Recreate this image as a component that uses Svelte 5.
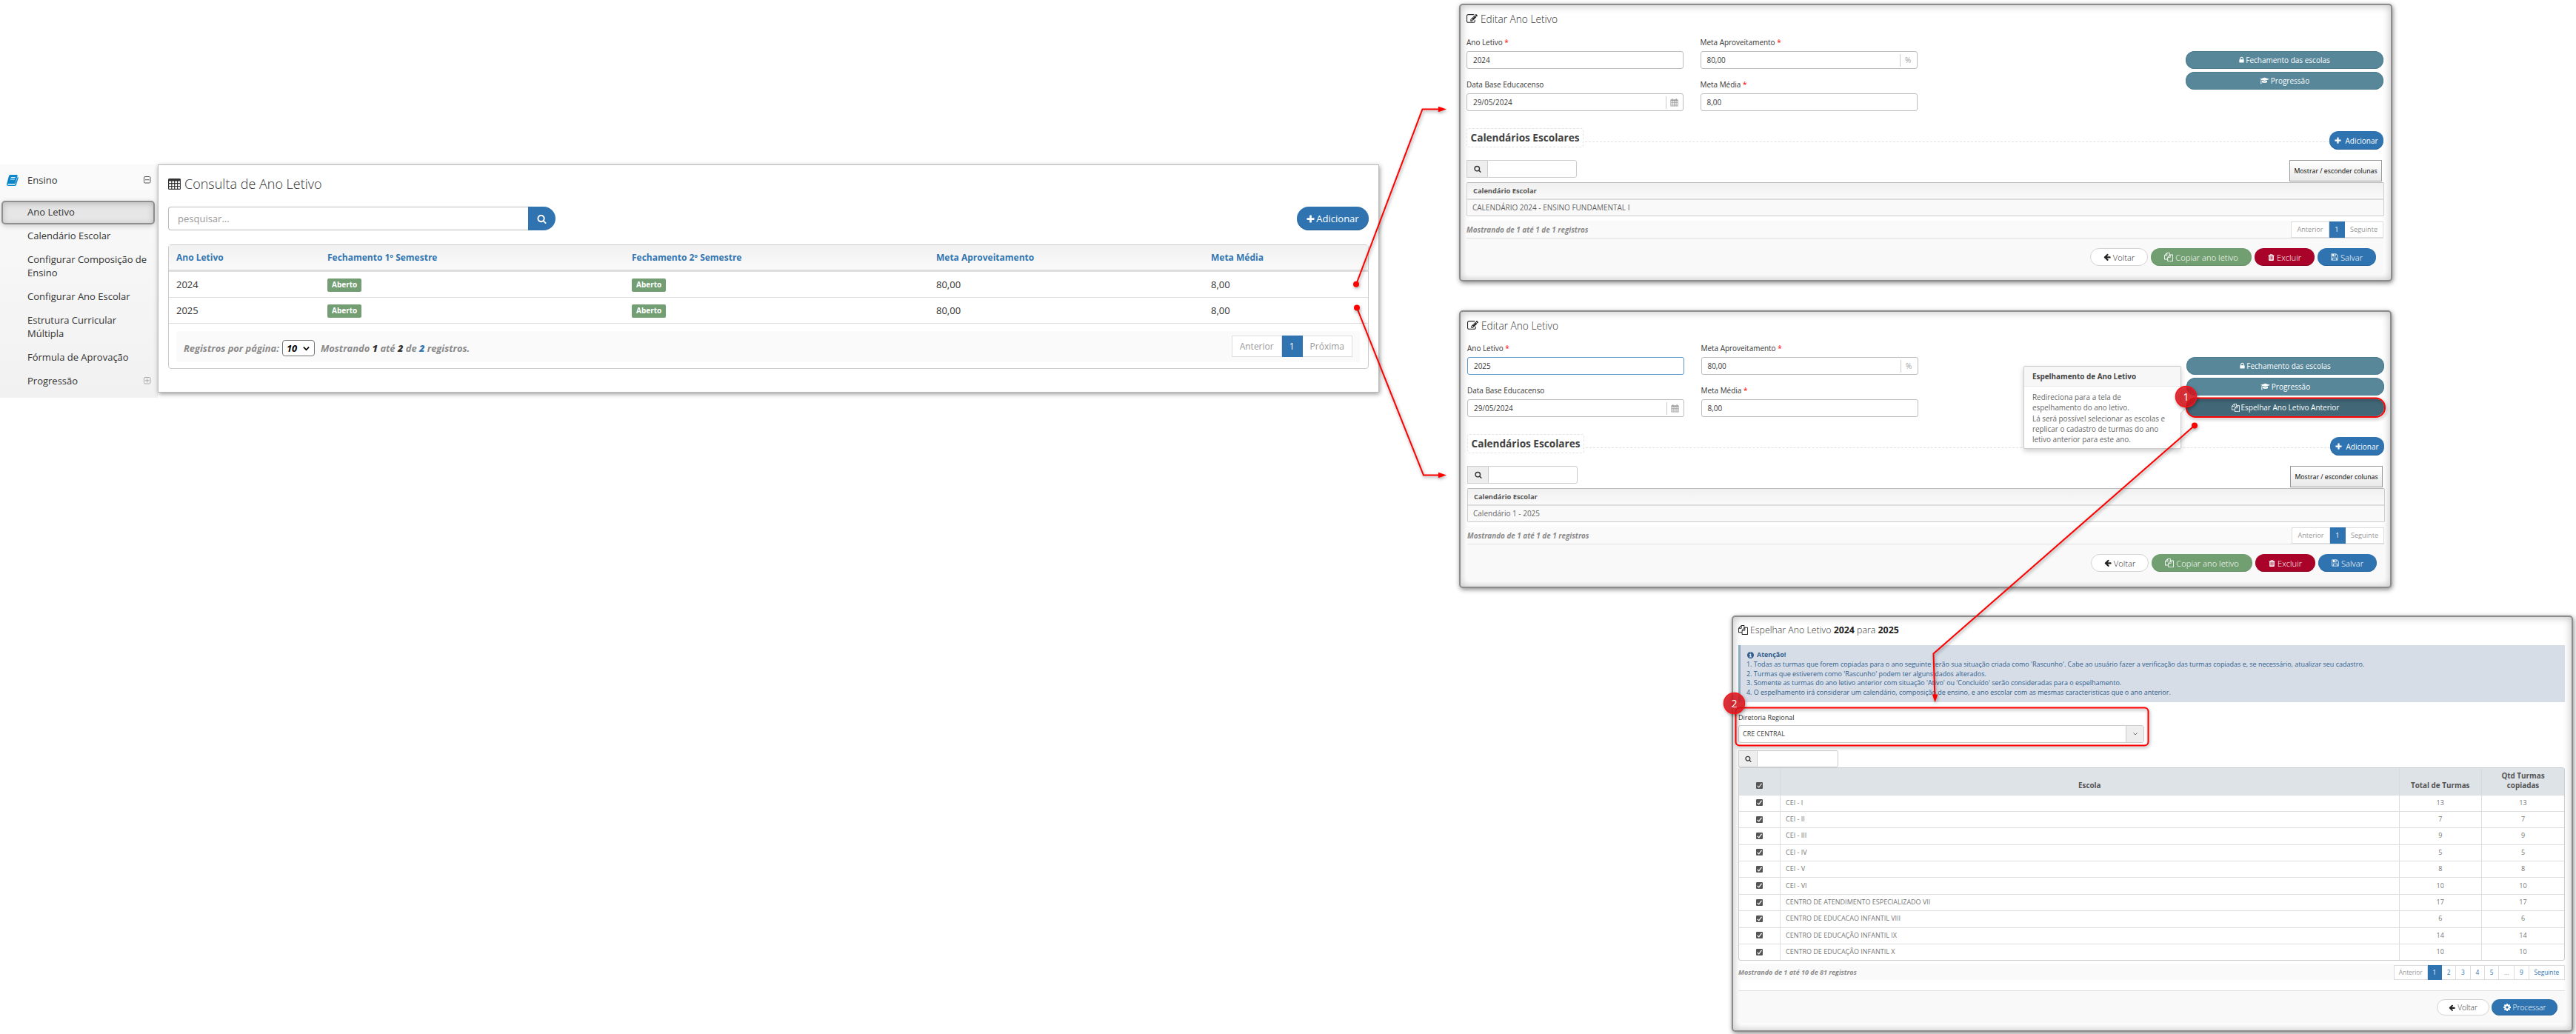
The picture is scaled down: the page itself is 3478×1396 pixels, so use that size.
<script>
    // icon outlines, [viewBox, path]
    const icons = {
        edit: ["0 0 1792 1792", "M888 1184l116-116-152-152-116 116v56h96v96h56zm440-720q-16-16-33 1l-350 350q-17 17-1 33t33-1l350-350q17-17 1-33zm80 594v190q0 119-84.5 203.5t-203.5 84.5h-832q-119 0-203.5-84.5t-84.5-203.5v-832q0-119 84.5-203.5t203.5-84.5h832q63 0 117 25 15 7 18 23 3 17-9 29l-49 49q-14 14-32 8-23-6-45-6h-832q-66 0-113 47t-47 113v832q0 66 47 113t113 47h832q66 0 113-47t47-113v-126q0-13 9-22l64-64q15-15 35-7t20 29zm-96-738l288 288-672 672h-288v-288zm444 132l-92 92-288-288 92-92q28-28 68-28t68 28l152 152q28 28 28 68t-28 68z"],
        search: ["0 0 1792 1792", "M1216 832q0-185-131.5-316.5t-316.5-131.5-316.5 131.5-131.5 316.5 131.5 316.5 316.5 131.5 316.5-131.5 131.5-316.5zm512 832q0 52-38 90t-90 38q-54 0-90-38l-343-342q-179 124-399 124-143 0-273.5-55.5t-225-150-150-225-55.5-273.5 55.5-273.5 150-225 225-150 273.5-55.5 273.5 55.5 225 150 150 225 55.5 273.5q0 220-124 399l343 343q37 37 37 90z"],
        plus: ["128 64 1536 1536", "M1600 736v192q0 40-28 68t-68 28h-416v416q0 40-28 68t-68 28h-192q-40 0-68-28t-28-68v-416h-416q-40 0-68-28t-28-68v-192q0-40 28-68t68-28h416v-416q0-40 28-68t68-28h192q40 0 68 28t28 68v416h416q40 0 68 28t28 68z"],
        lock: ["256 0 1280 1792", "M640 768h512v-192q0-106-75-181t-181-75-181 75-75 181v192zm832 96v576q0 40-28 68t-68 28h-960q-40 0-68-28t-28-68v-576q0-40 28-68t68-28h32v-192q0-184 132-316t316-132 316 132 132 316v192h32q40 0 68 28t28 68z"],
        cap: ["0 0 2304 1792", "M1774 836l18 316q4 69-82 128t-235 93.5-323 34.5-323-34.5-235-93.5-82-128l18-316 574 181q22 7 48 7t48-7zm530-324q0 23-22 31l-1120 352q-4 1-10 1t-10-1l-652-206q-43 34-71 111.5t-34 178.5q63 36 63 109 0 69-58 107l58 433q2 14-8 25-9 11-24 11h-192q-15 0-24-11-10-11-8-25l58-433q-58-38-58-107 0-73 65-111 11-207 98-330l-333-104q-22-8-22-31t22-31l1120-352q4-1 10-1t10 1l1120 352q22 8 22 31z"],
        copy: ["0 0 1792 1792", "M1696 384q40 0 68 28t28 68v1216q0 40-28 68t-68 28h-960q-40 0-68-28t-28-68v-288h-544q-40 0-68-28t-28-68v-672q0-40 20-88t48-76l408-408q28-28 76-48t88-20h416q40 0 68 28t28 68v328q68-40 128-40h416zm-544 213l-299 299h299v-299zm-640-384l-299 299h299v-299zm196 647l316-316v-416h-384v416q0 40-28 68t-68 28h-416v640h512v-256q0-40 20-88t48-76zm956 804v-1152h-384v416q0 40-28 68t-68 28h-416v640h896z"],
        trash: ["128 0 1536 1792", "M704 1376v-704q0-14-9-23t-23-9h-64q-14 0-23 9t-9 23v704q0 14 9 23t23 9h64q14 0 23-9t9-23zm256 0v-704q0-14-9-23t-23-9h-64q-14 0-23 9t-9 23v704q0 14 9 23t23 9h64q14 0 23-9t9-23zm256 0v-704q0-14-9-23t-23-9h-64q-14 0-23 9t-9 23v704q0 14 9 23t23 9h64q14 0 23-9t9-23zm-544-992h448l-48-117q-7-9-17-11h-317q-10 2-17 11zm928 32v64q0 14-9 23t-23 9h-96v948q0 83-47 143.5t-113 60.5h-832q-66 0-113-58.5t-47-141.5v-952h-96q-14 0-23-9t-9-23v-64q0-14 9-23t23-9h309l70-167q15-37 54-63t79-26h320q40 0 79 26t54 63l70 167h309q14 0 23 9t9 23z"],
        save: ["64 64 1664 1664", "M512 1536h768v-384h-768v384zm896 0h128v-896q0-14-10-38.5t-20-34.5l-281-281q-10-10-34-20t-39-10v416q0 40-28 68t-68 28h-576q-40 0-68-28t-28-68v-416h-128v1280h128v-416q0-40 28-68t68-28h832q40 0 68 28t28 68v416zm-384-928v-320q0-13-9.5-22.5t-22.5-9.5h-192q-13 0-22.5 9.5t-9.5 22.5v320q0 13 9.5 22.5t22.5 9.5h192q13 0 22.5-9.5t9.5-22.5zm640 32v928q0 40-28 68t-68 28h-1344q-40 0-68-28t-28-68v-1344q0-40 28-68t68-28h928q40 0 88 20t76 48l280 280q28 28 48 76t20 88z"],
        back: ["64 64 1664 1664", "M1664 896v128q0 53-32.5 90.5t-84.5 37.5h-704l293 294q38 36 38 90t-38 90l-75 76q-37 37-90 37-52 0-91-37l-651-652q-37-37-37-90 0-52 37-91l651-650q38-38 91-38 52 0 90 38l75 74q38 38 38 91t-38 91l-293 293h704q52 0 84.5 37.5t32.5 90.5z"],
        info: ["128 128 1536 1536", "M1152 1376v-160q0-14-9-23t-23-9h-96v-512q0-14-9-23t-23-9h-320q-14 0-23 9t-9 23v160q0 14 9 23t23 9h96v320h-96q-14 0-23 9t-9 23v160q0 14 9 23t23 9h448q14 0 23-9t9-23zm-128-896v-160q0-14-9-23t-23-9h-192q-14 0-23 9t-9 23v160q0 14 9 23t23 9h192q14 0 23-9t9-23zm640 416q0 209-103 385.5t-279.5 279.5-385.5 103-385.5-103-279.5-279.5-103-385.5 103-385.5 279.5-279.5 385.5-103 385.5 103 279.5 279.5 103 385.5z"],
        cog: ["128 128 1536 1536", "M1152 896q0-106-75-181t-181-75-181 75-75 181 75 181 181 75 181-75 75-181zm512-109v222q0 12-8 23t-20 13l-185 28q-19 54-39 91 35 50 107 138 10 12 10 25t-9 23q-27 37-99 108t-94 71q-12 0-26-9l-138-108q-44 23-91 38-16 136-29 186-7 28-36 28h-222q-14 0-24.5-8.5t-11.5-21.5l-28-184q-49-16-90-37l-141 107q-10 9-25 9-14 0-25-11-126-114-165-168-7-10-7-23 0-12 8-23 15-21 51-66.5t54-70.5q-27-50-41-99l-183-27q-13-2-21-12.5t-8-23.5v-222q0-12 8-23t19-13l186-28q14-46 39-92-40-57-107-138-10-12-10-24 0-10 9-23 26-36 98.5-107.5t94.5-71.5q13 0 26 10l138 107q44-23 91-38 16-136 29-186 7-28 36-28h222q14 0 24.5 8.5t11.5 21.5l28 184q49 16 90 37l142-107q9-9 24-9 13 0 25 10 129 119 165 170 7 8 7 22 0 12-8 23-15 21-51 66.5t-54 70.5q26 50 41 98l183 28q13 2 21 12.5t8 23.5z"],
        table: ["0 0 17 15", "M1.5 0h14Q17 0 17 1.500v12Q17 15 15.500 15h-14Q0 15 0 13.500v-12Q0 0 1.500 0zM1.200 3.500v2.600h3V3.500zm4.200 0v2.600h2.700V3.500zm3.900 0v2.600h2.700V3.500zm3.900 0v2.600h2.700V3.500zM1.200 7.300v2.600h3V7.300zm4.200 0v2.600h2.700V7.300zm3.900 0v2.600h2.700V7.300zm3.900 0v2.600h2.700V7.300zM1.200 11.100v2.600h3v-2.600zm4.200 0v2.600h2.700v-2.600zm3.900 0v2.600h2.700v-2.600zm3.900 0v2.600h2.700v-2.600z"],
        calendar: ["0 0 12 12", "M1 2h1.500V.5h1.200V2h4.600V.5h1.200V2H11q.6 0 .6.600V11.400q0 .6-.6.600H1q-.6 0-.6-.6V2.600Q.4 2 1 2zM1.200 4.300v1.600h1.700V4.300zm2.600 0v1.600h1.800V4.300zm2.700 0v1.600h1.800V4.300zm2.700 0v1.600h1.600V4.300zM1.200 6.700v1.600h1.700V6.700zm2.600 0v1.600h1.800V6.700zm2.700 0v1.600h1.800V6.700zm2.700 0v1.600h1.600V6.700zM1.200 9.100v1.700h1.700V9.100zm2.600 0v1.700h1.800V9.100zm2.700 0v1.700h1.800V9.100zm2.700 0v1.700h1.600V9.100z"],
        book: ["0 0 16 15", "M5 0h8.600q1.400 0 1 1.400L11.700 11q-.4 1.200-1.700 1.200H2.200q-.9 0-.9.700t1 .8h8.200q.7 0 .9-.7L14.800 2.800q1.300.4.900 1.600L12.900 13.600q-.4 1.300-1.700 1.400H2Q0 14.800 0 12.800L3 1.600Q3.400 0 5 0zM5.900 3l-.3 1.100h6L11.900 3zm-.8 2.400l-.3 1.100h6l.3-1.100z"],
        check: ["0 0 12 12", "M1.500 0h9Q12 0 12 1.500v9q0 1.500-1.500 1.500h-9Q0 12 0 10.500v-9Q0 0 1.500 0zM9.300 2L4.900 7.900 2.800 5.900 1.600 7.100l3.500 3.200L10.700 3z"],
    };

    const menu = [
        "Ano Letivo",
        "Calendário Escolar",
        "Configurar Composição de Ensino",
        "Configurar Ano Escolar",
        "Estrutura Curricular Múltipla",
        "Fórmula de Aprovação",
        "Progressão",
    ];

    const anos = ["2024", "2025"];

    const edits = [
        { cls: "first", ano: "2024", calendario: "CALENDÁRIO 2024 - ENSINO FUNDAMENTAL I" },
        { cls: "second", ano: "2025", calendario: "Calendário 1 - 2025", focus: true },
    ];

    const escolas = [
        ["CEI - I", 13],
        ["CEI - II", 7],
        ["CEI - III", 9],
        ["CEI - IV", 5],
        ["CEI - V", 8],
        ["CEI - VI", 10],
        ["CENTRO DE ATENDIMENTO ESPECIALIZADO VII", 17],
        ["CENTRO DE EDUCACAO INFANTIL VIII", 6],
        ["CENTRO DE EDUCAÇÃO INFANTIL IX", 14],
        ["CENTRO DE EDUCAÇÃO INFANTIL X", 10],
    ];

    const avisos = [
        "1. Todas as turmas que forem copiadas para o ano seguinte terão sua situação criada como 'Rascunho'. Cabe ao usuário fazer a verificação das turmas copiadas e, se necessário, atualizar seu cadastro.",
        "2. Turmas que estiverem como 'Rascunho' podem ter alguns dados alterados.",
        "3. Somente as turmas do ano letivo anterior com situação 'Ativo' ou 'Concluído' serão consideradas para o espelhamento.",
        "4. O espelhamento irá considerar um calendário, composição de ensino, e ano escolar com as mesmas caracteristicas que o ano anterior.",
    ];

    const paginas = ["1", "2", "3", "4", "5", "...", "9"];
</script>

{#snippet icon(name, w, h = w)}
    <svg class="icon" viewBox={icons[name][0]} width={w} height={h}>
        <path d={icons[name][1]} fill="currentColor" fill-rule={["table", "calendar", "book", "check"].includes(name) ? "evenodd" : "nonzero"} />
    </svg>
{/snippet}

{#snippet toggle(plus)}
    <svg class="toggle" class:pale={plus} viewBox="0 0 10 10" width="10" height="10">
        <rect x=".5" y=".5" width="8.500" height="8.500" rx="1.500" fill="none" stroke="currentColor" />
        <path d={plus ? "M2 4.750h5.500M4.750 2v5.500" : "M2 4.750h5.500"} stroke="currentColor" fill="none" />
    </svg>
{/snippet}

<div class="board">
    <aside class="sidebar">
        <div class="menu-head">
            <span class="book">{@render icon("book", 16, 15)}</span>
            <span>Ensino</span>
            {@render toggle(false)}
        </div>
        {#each menu as item, i}
            <div class="menu-item" class:active={i == 0}>
                <span>{item}</span>
                {#if i == menu.length - 1}
                    {@render toggle(true)}
                {/if}
            </div>
        {/each}
    </aside>

    <section class="window list">
        <h1>{@render icon("table", 17, 15)} <span>Consulta de Ano Letivo</span></h1>
        <div class="list-bar">
            <div class="list-search">
                <div class="box">pesquisar...</div>
                <button>{@render icon("search", 13)}</button>
            </div>
            <button class="pill blue big">{@render icon("plus", 11)}<span>Adicionar</span></button>
        </div>
        <div class="list-table">
            <div class="list-row head">
                <b>Ano Letivo</b>
                <b>Fechamento 1º Semestre</b>
                <b>Fechamento 2º Semestre</b>
                <b>Meta Aproveitamento</b>
                <b>Meta Média</b>
            </div>
            {#each anos as ano}
                <div class="list-row">
                    <span>{ano}</span>
                    <span><i class="tag">Aberto</i></span>
                    <span><i class="tag">Aberto</i></span>
                    <span>80,00</span>
                    <span>8,00</span>
                </div>
            {/each}
            <div class="list-foot">
                <span class="por-pagina">Registros por página:</span>
                <span class="select">10
                    <svg viewBox="0 0 10 7" width="9" height="7"><path d="M1 1.500l4 4 4-4" fill="none" stroke="#000" stroke-width="2" /></svg>
                </span>
                <span>Mostrando <b>1</b> até <b>2</b> de <b class="link">2</b> registros.</span>
                <div class="pages">
                    <span>Anterior</span><span class="on">1</span><span>Próxima</span>
                </div>
            </div>
        </div>
    </section>

    {#each edits as e}
        <section class="window raised edit {e.cls}">
            <h2>{@render icon("edit", 15)}<span>Editar Ano Letivo</span></h2>
            <div class="form">
                <div class="field">
                    <label>Ano Letivo <em>*</em></label>
                    <div class="input" class:focus={e.focus}>{e.ano}</div>
                </div>
                <div class="field">
                    <label>Meta Aproveitamento <em>*</em></label>
                    <div class="input">80,00<span class="addon">%</span></div>
                </div>
                <div class="field">
                    <label>Data Base Educacenso</label>
                    <div class="input">29/05/2024<span class="addon">{@render icon("calendar", 11, 12)}</span></div>
                </div>
                <div class="field">
                    <label>Meta Média <em>*</em></label>
                    <div class="input">8,00</div>
                </div>
                <div class="side">
                    <button class="pill teal">{@render icon("lock", 7, 10)}<span>Fechamento das escolas</span></button>
                    <button class="pill teal">{@render icon("cap", 13, 10)}<span>Progressão</span></button>
                    {#if e.focus}
                        <button class="pill teal dark">{@render icon("copy", 11)}<span>Espelhar Ano Letivo Anterior</span></button>
                    {/if}
                </div>
            </div>
            <div class="legend">
                <strong>Calendários Escolares</strong>
                <hr />
                <button class="pill blue add">{@render icon("plus", 9)}<span>Adicionar</span></button>
            </div>
            <div class="tools">
                <div class="search"><span>{@render icon("search", 10)}</span><div></div></div>
                <button class="columns">Mostrar / esconder colunas</button>
            </div>
            <div class="grid">
                <b>Calendário Escolar</b>
                <div>{e.calendario}</div>
            </div>
            <div class="info">
                <span>Mostrando de 1 até 1 de 1 registros</span>
                <div class="pages"><span>Anterior</span><span class="on">1</span><span>Seguinte</span></div>
            </div>
            <div class="actions">
                <button class="pill white voltar">{@render icon("back", 10)}<span>Voltar</span></button>
                <button class="pill green copiar">{@render icon("copy", 12)}<span>Copiar ano letivo</span></button>
                <button class="pill red excluir">{@render icon("trash", 9, 11)}<span>Excluir</span></button>
                <button class="pill blue salvar">{@render icon("save", 10)}<span>Salvar</span></button>
            </div>
            {#if e.focus}
                <div class="popover">
                    <b>Espelhamento de Ano Letivo</b>
                    <p>Redireciona para a tela de<br />espelhamento do ano letivo.<br />Lá será possível selecionar as escolas e<br />replicar o cadastro de turmas do ano<br />letivo anterior para este ano.</p>
                    <svg viewBox="0 0 8 16" width="8" height="16"><path d="M0 0L7.500 8 0 16z" fill="#fff" /><path d="M0 0L7.500 8 0 16" fill="none" stroke="#ccc" /></svg>
                </div>
            {/if}
        </section>
    {/each}

    <section class="window raised mirror">
        <h2>{@render icon("copy", 13)}<span>Espelhar Ano Letivo <b>2024</b> para <b>2025</b></span></h2>
        <div class="alert">
            <div><b>{@render icon("info", 9)}Atenção!</b></div>
            {#each avisos as aviso}
                <div>{aviso}</div>
            {/each}
        </div>
        <div class="regional">
            <label>Diretoria Regional</label>
            <div class="combo">
                <span>CRE CENTRAL</span>
                <i><svg viewBox="0 0 6 4" width="6" height="4"><path d="M.5.5L3 3 5.500.5" fill="none" stroke="#666" /></svg></i>
            </div>
        </div>
        <div class="search"><span>{@render icon("search", 9)}</span><div></div></div>
        <div class="schools">
            <div class="school head">
                <span>{@render icon("check", 9)}</span>
                <b>Escola</b>
                <b>Total de Turmas</b>
                <b>Qtd Turmas<br />copiadas</b>
            </div>
            {#each escolas as [nome, total]}
                <div class="school">
                    <span>{@render icon("check", 9)}</span>
                    <span class="nome">{nome}</span>
                    <span>{total}</span>
                    <span>{total}</span>
                </div>
            {/each}
        </div>
        <div class="info">
            <span>Mostrando de 1 até 10 de 81 registros</span>
            <div class="pages">
                <span class="prev">Anterior</span>
                {#each paginas as p, i}
                    <span class="n" class:on={i == 0} class:dots={p == "..."}>{p}</span>
                {/each}
                <span class="next">Seguinte</span>
            </div>
        </div>
        <div class="actions">
            <button class="pill white voltar">{@render icon("back", 9)}<span>Voltar</span></button>
            <button class="pill blue processar">{@render icon("cog", 10)}<span>Processar</span></button>
        </div>
    </section>

    <!-- arrows, outlines and step numbers drawn over the windows -->
    <svg class="marks" viewBox="0 0 3478 1396" width="3478" height="1396">
        <g class="stroke">
            <path d="M1831 384L1920.500 147.500H1944" />
            <path d="M1832 415.500L1922 641.500H1944" />
            <path d="M2963 574.500L2610.500 882.500 2612.300 938" />
            <rect x="2952" y="537.500" width="268" height="25.500" rx="12.500" />
            <rect x="2343.500" y="955.500" width="557" height="51" rx="5" />
        </g>
        <g class="fill">
            <circle cx="1831" cy="383.700" r="4" />
            <circle cx="1832" cy="415.500" r="4" />
            <circle cx="2963" cy="574.500" r="4" />
            <path d="M1953 147.500l-11-3.800v7.600z" />
            <path d="M1953 641.500l-11-3.800v7.600z" />
            <path d="M2612.600 948.500l-3.800-11h7.600z" />
        </g>
        <g class="step">
            <circle cx="2951.500" cy="535.500" r="14" />
            <text x="2951.500" y="540.500">1</text>
            <circle cx="2341.500" cy="949.500" r="14" />
            <text x="2341.500" y="954.500">2</text>
        </g>
    </svg>
</div>

<style>
    :global(body) {
        background: #fff;
    }

    .board {
        position: relative;
        width: 3478px;
        height: 1396px;
        overflow: hidden;
        background: #fff;
        font-family: "Open Sans", "Noto Sans", sans-serif;
        font-size: 13px;
        color: #444;
    }

    .board * {
        box-sizing: border-box;
    }

    button {
        font-family: inherit;
        margin: 0;
        padding: 0;
        border: none;
    }

    .icon {
        display: block;
        flex: none;
    }

    /* sidebar */
    .sidebar {
        position: absolute;
        left: 0;
        top: 222px;
        width: 213px;
        height: 315px;
        background: linear-gradient(#fafafa, #f1f1f1);
        color: #333;
    }

    .menu-head {
        display: flex;
        align-items: center;
        height: 42px;
        padding: 0 9px;
        margin-bottom: 7px;
    }

    .menu-head .book {
        width: 28px;
        color: #0a87cb;
    }

    .toggle {
        margin-left: auto;
        color: #555;
    }

    .toggle.pale {
        color: #aaa;
    }

    .menu-item {
        display: flex;
        align-items: center;
        padding: 7px 9px 7px 37px;
        line-height: 18px;
    }

    .menu-item.active {
        margin: 1px 4px -1px 2px;
        padding: 4px 9px 6px 33px;
        height: 32px;
        border: 2px solid #8f8f8f;
        border-radius: 5px;
        background: #e6e6e6;
        box-shadow: inset 0 2px 8px #bbb, 0 2px 7px #ccc;
    }

    /* windows */
    .window {
        position: absolute;
        background: #fff;
    }

    .raised {
        border: 2px solid #8c8c8c;
        border-radius: 5px;
        box-shadow: inset 0 0 11px 1px #c4c4c4, 1px 2px 6px #888;
    }

    .pill {
        display: flex;
        align-items: center;
        justify-content: center;
        color: #fff;
        font-size: 10px;
        border-radius: 14px;
    }

    .blue {
        background: #2f74b0;
        box-shadow: inset 0 -1px #28649a;
    }

    .teal {
        background: #58879a;
        box-shadow: inset 0 0 0 1px #4d7d90;
    }

    .dark {
        background: #426878;
    }

    .green {
        background: #729f71;
        box-shadow: inset 0 -1px #659264;
    }

    .red {
        background: #a90329;
        box-shadow: inset 0 -1px #900323;
    }

    .white {
        background: #fff;
        color: #333;
        border: 1px solid #d4d4d4;
    }

    .white .icon {
        color: #222;
    }

    .pages {
        display: flex;
        margin-left: auto;
        font-style: normal;
        font-weight: 400;
        color: #999;
    }

    .pages span {
        display: flex;
        align-items: center;
        justify-content: center;
        background: #fff;
        border: 1px solid #ddd;
        border-left: none;
    }

    .pages span:first-child {
        border-left: 1px solid #ddd;
    }

    .pages .on {
        background: #2f74b0;
        border-color: #2f74b0;
        color: #fff;
    }

    /* list window */
    .list {
        left: 213px;
        top: 222px;
        width: 1649px;
        height: 308px;
        padding: 13px 13px 0 13px;
        border: 1px solid #bbb;
        box-shadow: 1px 2px 6px #999;
    }

    .list h1 {
        display: flex;
        align-items: center;
        gap: 5px;
        height: 24px;
        margin: 0 0 19px;
        font-size: 18px;
        font-weight: 300;
        color: #333;
    }

    .list-bar {
        display: flex;
        justify-content: space-between;
        height: 32px;
        margin-bottom: 19px;
    }

    .list-search {
        display: flex;
        width: 523px;
    }

    .list-search .box {
        flex: 1;
        padding-left: 12px;
        line-height: 30px;
        color: #999;
        border: 1px solid #bdbdbd;
        border-right: none;
        border-radius: 4px 0 0 4px;
    }

    .list-search button {
        display: flex;
        align-items: center;
        justify-content: center;
        width: 37px;
        background: #2f74b0;
        color: #fff;
        border-radius: 0 16px 16px 0;
    }

    .big {
        width: 97px;
        gap: 2px;
        font-size: 13px;
        border-radius: 16px;
    }

    .list-table {
        height: 168px;
        border: 1px solid #ccc;
        border-radius: 4px;
    }

    .list-row {
        display: grid;
        grid-template-columns: 204px 411px 411px 371px 1fr;
        align-items: center;
        height: 35px;
        padding-left: 10px;
        border-bottom: 1px solid #ddd;
        color: #333;
    }

    .list-row.head {
        height: 36px;
        border-bottom: 3px solid #ddd;
        background: linear-gradient(#f1f1f1, #fafafa);
        font-size: 12px;
        color: #3276b1;
    }

    .tag {
        display: inline-block;
        height: 18px;
        margin-top: 2px;
        padding: 0 6px;
        line-height: 17px;
        font-size: 10px;
        font-style: normal;
        font-weight: 700;
        color: #fff;
        background: #739e73;
        border-radius: 2px;
        vertical-align: middle;
    }

    .list-foot {
        display: flex;
        align-items: center;
        height: 42px;
        margin: 10px 11px 0 10px;
        padding: 5px 10px 7px;
        background: #fafafa;
        font-size: 12.9px;
        font-weight: 700;
        font-style: italic;
        color: #8a8a8a;
    }

    .list-foot b {
        color: #333;
    }

    .list-foot b.link {
        color: #3276b1;
    }

    .select {
        display: flex;
        align-items: center;
        gap: 8px;
        width: 44px;
        height: 22px;
        margin: 6px 8px 0 4px;
        padding-left: 5px;
        color: #000;
        background: #fff;
        border: 1px solid #767676;
        border-radius: 4px;
    }

    .list-foot > span {
        position: relative;
        top: 3px;
        white-space: nowrap;
    }

    .list-foot > .select {
        top: 0;
    }

    .list-foot .pages {
        font-size: 12px;
    }

    .list-foot .pages span {
        height: 29px;
        padding: 0 10px;
        font-weight: 400;
    }

    /* edit windows */
    .edit {
        left: 1970px;
        width: 1260px;
        height: 375px;
        padding: 8px 10px 0 8px;
    }

    .first {
        top: 5px;
    }

    .first h2 {
        margin-bottom: 15px;
    }

    .second {
        top: 419px;
        width: 1259px;
        padding: 8px 8px 0 9px;
    }

    h2 {
        display: flex;
        align-items: center;
        gap: 4px;
        height: 20px;
        margin: 0 0 14px;
        font-size: 13.7px;
        font-weight: 300;
        color: #333;
    }

    h2 .icon {
        color: #222;
    }

    .form {
        display: grid;
        grid-template-columns: 293px 293px 1fr;
        column-gap: 22.5px;
        row-gap: 14px;
        height: 100px;
        font-size: 9.95px;
    }

    .field em {
        color: #f00;
        font-style: normal;
    }

    label {
        display: block;
        height: 14px;
        line-height: 14px;
        margin-bottom: 5px;
        color: #333;
    }

    .input {
        display: flex;
        align-items: center;
        height: 24px;
        padding: 0 0 0 8px;
        border: 1px solid #bdbdbd;
        border-radius: 3px;
        color: #404040;
    }

    .input.focus {
        border-color: #5d98cc;
    }

    .addon {
        display: flex;
        align-items: center;
        justify-content: center;
        width: 23px;
        height: 17px;
        margin-left: auto;
        padding-right: 1px;
        border-left: 1px solid #ccc;
        color: #a2a2a2;
    }

    .side {
        grid-column: 3;
        grid-row: 1 / 3;
        display: flex;
        flex-direction: column;
        gap: 4px;
        width: 267px;
        margin: 19px 0 0 auto;
    }

    .side .pill {
        height: 24px;
        gap: 2px;
        flex: none;
    }

    .legend {
        display: flex;
        height: 29px;
        margin-top: 23px;
    }

    .legend strong {
        width: 158px;
        height: 26px;
        line-height: 24px;
        text-align: center;
        font-size: 13.6px;
        border: 1px dashed #e4e4e4;
        border-radius: 3px;
        color: #404040;
        white-space: nowrap;
    }

    .legend hr {
        flex: 1;
        height: 0;
        margin: 18px 0 0 2px;
        border: none;
        border-top: 1px dashed #e2e2e2;
    }

    .add {
        width: 73px;
        height: 25px;
        margin-top: 4px;
        gap: 5px;
        border-radius: 12px;
    }

    .tools {
        display: flex;
        justify-content: space-between;
        margin-top: 14px;
        height: 30px;
    }

    .search {
        display: flex;
        width: 149px;
        height: 24px;
    }

    .search span {
        display: flex;
        align-items: center;
        justify-content: center;
        width: 28px;
        background: #eee;
        border: 1px solid #ccc;
        border-right: none;
        color: #333;
    }

    .search div {
        flex: 1;
        border: 1px solid #ccc;
        border-radius: 0 3px 3px 0;
    }

    .columns {
        width: 125px;
        height: 29px;
        margin-right: 2px;
        font-size: 8.8px;
        color: #000;
        border: 1px solid #999;
        background: linear-gradient(#fff, #e9e9e9);
        white-space: nowrap;
    }

    .grid {
        height: 46px;
        margin-right: -1px;
        border: 1px solid #ccc;
        border-top: 1px solid #bbb;
        border-radius: 2px;
        font-size: 10px;
        color: #666;
    }

    .grid b {
        display: block;
        height: 23px;
        padding-left: 8px;
        line-height: 22px;
        font-size: 9.3px;
        color: #555;
        background: linear-gradient(#f0f0f0, #fafafa);
        border-bottom: 2px solid #ddd;
    }

    .grid div {
        height: 21px;
        padding-left: 7px;
        line-height: 21px;
        background: #f9f9f9;
    }

    .info {
        display: flex;
        align-items: center;
        height: 23px;
        margin-top: 6px;
        background: #fafafa;
        font-size: 9.9px;
        font-weight: 700;
        font-style: italic;
        color: #8a8a8a;
    }

    .edit .pages {
        font-size: 9.2px;
    }

    .edit .pages span {
        height: 22px;
        width: 52px;
    }

    .edit .pages .on {
        width: 21px;
    }

    .actions {
        display: flex;
        justify-content: flex-end;
        height: 50px;
        padding: 13px 10px 0 0;
        gap: 4px;
        background: #f9f9f9;
        border-top: 1px solid #e0e0e0;
    }

    .actions .pill {
        height: 24px;
        gap: 3px;
        font-size: 11.2px;
        font-weight: 300;
    }

    .voltar {
        width: 78px;
    }

    .copiar {
        width: 136px;
    }

    .excluir {
        width: 81px;
    }

    .salvar {
        width: 79px;
    }

    .popover {
        position: absolute;
        left: 760px;
        top: 73px;
        width: 213px;
        height: 112px;
        background: #fff;
        border: 1px solid #ccc;
        border-radius: 2px;
        box-shadow: 0 3px 7px rgba(0, 0, 0, 0.2);
        font-size: 9.9px;
        color: #666;
    }

    .popover b {
        display: block;
        height: 27px;
        padding-left: 11px;
        line-height: 26px;
        color: #444;
        background: #f7f7f7;
        border-bottom: 1px solid #ebebeb;
    }

    .popover p {
        margin: 7px 0 0 11px;
        line-height: 14.3px;
        white-space: nowrap;
    }

    .popover svg {
        position: absolute;
        left: 211px;
        top: 47px;
    }

    /* mirror window */
    .mirror {
        left: 2338px;
        top: 831px;
        width: 1136px;
        height: 562px;
        padding: 7px 9px 0 7px;
    }

    .mirror h2 {
        margin-bottom: 11px;
        font-size: 12.35px;
        gap: 3px;
    }

    .mirror h2 b {
        font-weight: 700;
        color: #222;
    }

    .alert {
        height: 77px;
        padding: 7px 0 0 8px;
        background: #d6dde7;
        border-left: 3px solid #8fabbf;
        font-size: 8.96px;
        line-height: 12.8px;
        color: #305d8c;
        white-space: nowrap;
    }

    .alert b {
        display: flex;
        align-items: center;
        gap: 4px;
        padding-left: 1px;
    }

    .regional {
        width: 548px;
        margin-top: 14px;
        font-size: 9px;
    }

    .regional label {
        margin-bottom: 3px;
    }

    .combo {
        display: flex;
        height: 24px;
        border: 1px solid #ccc;
        border-radius: 3px;
        line-height: 22px;
        color: #444;
    }

    .combo span {
        flex: 1;
        padding-left: 5px;
    }

    .combo i {
        display: flex;
        align-items: center;
        justify-content: center;
        width: 24px;
        background: #eee;
        border-left: 1px solid #ccc;
    }

    .mirror .search {
        width: 134.5px;
        height: 23px;
        margin-top: 10px;
    }

    .mirror .search span {
        width: 25px;
    }

    .schools {
        height: 261px;
        border: 1px solid #ccc;
        border-radius: 3px;
        font-size: 9px;
        color: #777;
    }

    .school {
        display: grid;
        grid-template-columns: 55px 1fr 111.5px 112px;
        height: 22.4px;
        border-top: 1px solid #ddd;
    }

    .school > * {
        display: flex;
        align-items: center;
        justify-content: center;
        padding-bottom: 2px;
        border-left: 1px solid #ddd;
    }

    .school > :first-child {
        padding-bottom: 1px;
        border-left: none;
        color: #555;
    }

    .school .nome {
        justify-content: flex-start;
        padding-left: 7px;
    }

    .school.head {
        height: 35.5px;
        border-top: none;
        background: #dee3e8;
        font-size: 9.9px;
        line-height: 13.5px;
        color: #555;
    }

    .school.head > * {
        align-items: flex-end;
        padding-bottom: 5px;
        text-align: center;
        border-color: #d5dadf;
    }

    .school.head > :first-child {
        padding-bottom: 8px;
    }

    .mirror .info {
        height: 21px;
        margin-top: 5px;
        font-size: 9px;
    }

    .mirror .pages {
        font-size: 8.3px;
    }

    .mirror .pages span {
        height: 20px;
    }

    .mirror .prev {
        width: 46px;
    }

    .mirror .n {
        width: 19.3px;
        color: #3276b1;
    }

    .mirror .n.on {
        color: #fff;
    }

    .mirror .n.dots {
        width: 21px;
        color: #999;
    }

    .mirror .next {
        width: 48.5px;
        color: #3276b1;
    }

    .mirror .actions {
        height: 44px;
        margin-top: 14px;
        padding-top: 11px;
        gap: 3px;
    }

    .mirror .actions .pill {
        height: 22px;
        font-size: 10.1px;
    }

    .mirror .voltar {
        width: 71px;
    }

    .mirror .processar {
        width: 89px;
    }

    /* marks */
    .marks {
        position: absolute;
        left: 0;
        top: 0;
    }

    .stroke {
        fill: none;
        stroke: #f00;
        stroke-width: 2;
        filter: drop-shadow(1px 2px 2px rgba(0, 0, 0, 0.4));
    }

    .fill {
        fill: #f00;
        filter: drop-shadow(1px 2px 2px rgba(0, 0, 0, 0.3));
    }

    .step circle {
        fill: rgba(225, 20, 28, 0.82);
        stroke: #f3161c;
        stroke-width: 1.5;
        filter: drop-shadow(1px 2px 2px rgba(0, 0, 0, 0.4));
    }

    .step text {
        fill: #fff;
        font-size: 14px;
        text-anchor: middle;
    }
</style>
